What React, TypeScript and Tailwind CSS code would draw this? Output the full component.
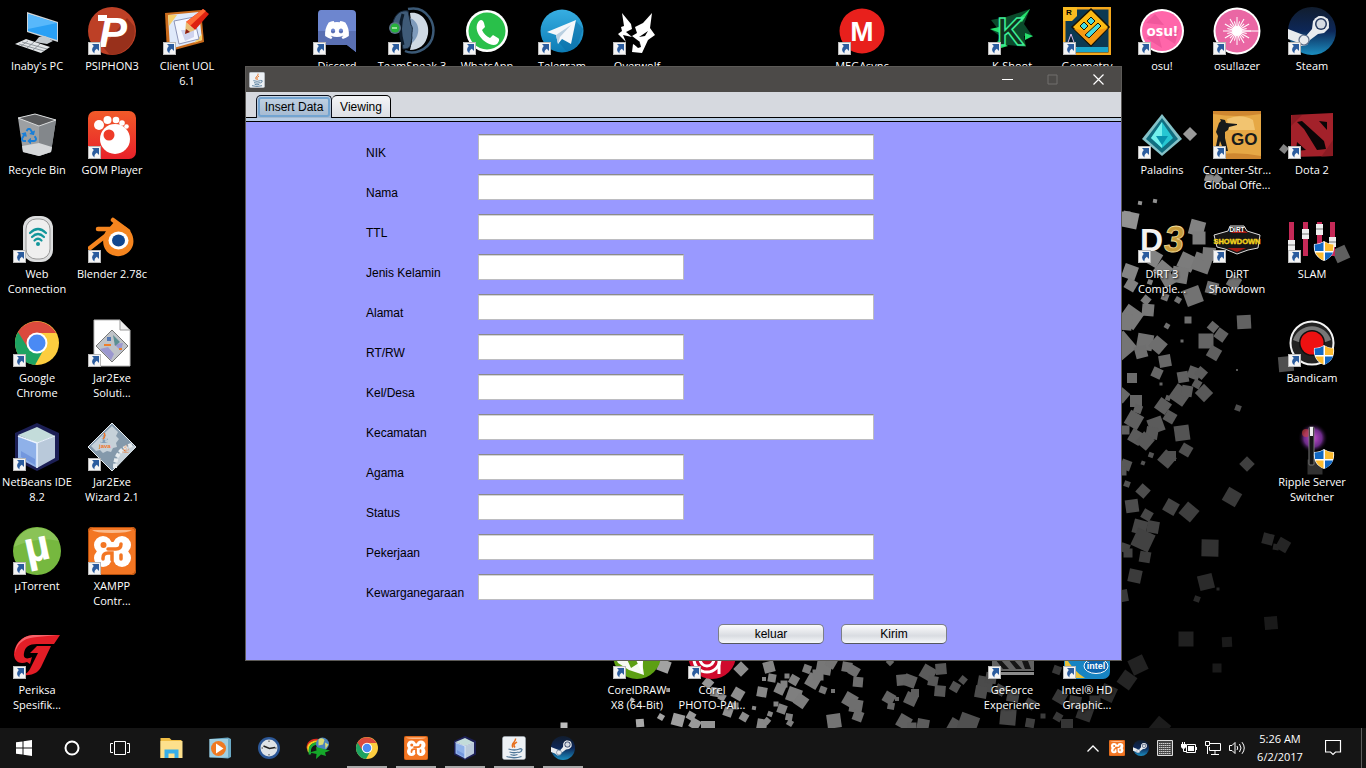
import React from "react";
import { FaDiscord, FaJava, FaRecycle } from "react-icons/fa";

/* ---------- wallpaper ---------- */

type Square = [x: number, y: number, size: number, angle: number];

const squares: Square[] = [
  [1190, 134, 10, 45], [1284, 149, 7, 40], [1209, 178, 8, 20], [1217, 179, 8, 40], [1155, 201, 4, 10],
  [1341, 254, 14, -25], [1286, 364, 15, -5], [1315, 467, 15, 0],
  [1130, 220, 16, 12], [1124, 218, 13, 0], [1197, 228, 15, 15], [1199, 238, 13, 0], [1187, 262, 16, 25],
  [1202, 263, 18, 20], [1209, 254, 13, 5], [1153, 258, 15, 30], [1130, 272, 14, 20], [1131, 285, 11, 30],
  [1163, 270, 15, 40], [1180, 275, 16, 10], [1168, 280, 12, 60], [1193, 296, 17, -20], [1212, 288, 12, 15],
  [1234, 282, 12, 30], [1148, 310, 12, 5], [1131, 317, 19, 35], [1124, 322, 16, 5], [1146, 300, 8, 40],
  [1178, 300, 6, 30], [1165, 297, 7, 20], [1140, 203, 4, 10], [1150, 282, 5, 20], [1188, 320, 7, 0],
  [1167, 326, 5, 30], [1244, 322, 14, -3], [1213, 327, 9, 40], [1221, 335, 11, 35], [1206, 341, 15, 0],
  [1214, 353, 12, 30], [1182, 341, 3, 0], [1122, 346, 22, 50], [1145, 342, 16, 10], [1141, 352, 12, -15],
  [1158, 345, 14, 40], [1165, 361, 12, -10], [1157, 373, 10, 25], [1161, 384, 3, 0], [1132, 378, 10, 0],
  [1183, 377, 11, -10], [1194, 373, 12, 20], [1201, 373, 10, 40], [1237, 370, 2, 0], [1197, 384, 8, 30],
  [1180, 395, 17, 35], [1187, 391, 11, 10], [1204, 393, 13, 45], [1122, 395, 12, 40], [1136, 401, 12, 0],
  [1138, 409, 8, 20], [1163, 406, 13, 35], [1168, 398, 5, 20], [1238, 408, 6, 20], [1170, 417, 11, 30],
  [1134, 420, 15, 30], [1125, 430, 9, 0], [1156, 425, 15, -20], [1152, 433, 12, 10], [1182, 433, 15, -8],
  [1136, 437, 13, 30], [1145, 441, 14, 40], [1186, 450, 11, 30], [1151, 455, 5, 20], [1167, 459, 14, 40],
  [1171, 456, 10, 0], [1143, 463, 4, 20], [1126, 465, 10, 20], [1122, 471, 9, 0], [1247, 464, 11, 45],
  [1232, 497, 15, 30], [1127, 484, 6, 20], [1143, 491, 11, 42], [1132, 506, 13, -8], [1171, 507, 13, 30],
  [1189, 512, 15, 40], [1147, 515, 10, 30], [1140, 527, 14, 15], [1153, 527, 12, 10], [1143, 540, 19, 25],
  [1125, 548, 9, 20], [1128, 553, 9, 0], [1145, 557, 11, 10], [1135, 576, 13, 12], [1122, 596, 12, -10],
  [1210, 548, 17, 1], [1206, 582, 15, -14], [1218, 589, 3, 0], [1197, 599, 6, 20], [1268, 539, 11, 15],
  [1276, 547, 6, 10], [1283, 545, 12, 30], [1271, 623, 13, -5], [1186, 639, 15, 0], [1227, 642, 10, -3],
  [1138, 665, 16, -25], [1217, 668, 9, 0], [1127, 680, 15, 35], [1160, 727, 16, 40],
  [664, 666, 12, 20], [741, 669, 11, 45], [769, 667, 11, -15], [772, 678, 8, 10], [764, 679, 4, 0],
  [780, 689, 10, 25], [784, 684, 7, 0], [762, 692, 10, 10], [794, 680, 9, 30], [787, 676, 5, 0],
  [807, 669, 8, 20], [824, 667, 15, 10], [831, 663, 10, 30], [813, 681, 13, 30], [818, 675, 11, 0],
  [823, 690, 7, 20], [833, 691, 4, 0], [847, 667, 10, 10], [854, 671, 10, 30], [858, 682, 10, 5],
  [850, 700, 13, 30], [856, 706, 13, 10], [858, 716, 10, 20], [794, 695, 14, 20], [801, 701, 12, 35],
  [782, 709, 9, 20], [789, 717, 7, 10], [790, 723, 6, 30], [776, 704, 5, 0], [770, 714, 5, 20],
  [738, 694, 11, 30], [728, 712, 9, 20], [735, 706, 7, 0], [744, 717, 8, 30], [754, 708, 4, 10],
  [762, 724, 10, 10], [767, 721, 6, 40], [834, 721, 14, -8], [902, 680, 11, -5], [910, 681, 12, 20],
  [889, 698, 11, 30], [891, 706, 7, 10], [911, 699, 12, 25], [915, 693, 8, 0], [897, 699, 4, 0],
  [928, 673, 14, 30], [933, 681, 10, 10], [941, 669, 11, -5], [940, 691, 11, 5], [955, 687, 9, 30],
  [963, 680, 7, 40], [904, 722, 13, 30], [923, 725, 12, 10], [912, 727, 9, 0], [955, 726, 13, 30],
  [968, 724, 19, 20], [1008, 717, 16, 5], [985, 684, 15, 10], [981, 692, 12, 10], [991, 678, 11, 10],
  [1030, 723, 9, 10], [1043, 716, 5, 0], [1058, 717, 8, 30], [1067, 725, 12, 0], [1085, 713, 15, 20],
  [1057, 670, 8, 20], [1060, 697, 12, 30], [1075, 702, 12, 10], [1108, 693, 15, 25], [1095, 701, 11, 0],
  [678, 720, 12, 15], [691, 716, 8, 30], [695, 724, 10, 30], [640, 723, 8, -5], [661, 717, 6, 30],
  [564, 726, 7, 0], [708, 683, 9, 40], [715, 692, 9, 10], [722, 697, 7, 30], [708, 728, 14, 0],
  [668, 690, 4, 0], [632, 700, 4, 30], [890, 662, 6, 45], [1000, 690, 10, 30], [1013, 696, 12, 10],
  [1030, 704, 10, 30],
];

function shade(x: number, y: number) {
  const level = y > 655 ? 190 - (x - 560) * 0.27 : 152 - (y - 200) * 0.24 - (x - 1120) * 0.2;
  return Math.round(Math.max(26, Math.min(190, level)));
}

function Wallpaper() {
  return (
    <svg className="pointer-events-none absolute left-0 top-0" width="1366" height="728" aria-hidden="true">
      {squares.map(([x, y, s, a], i) => {
        const g = shade(x, y);
        return (
          <rect key={i} x={x - s / 2} y={y - s / 2} width={s} height={s} transform={`rotate(${a} ${x} ${y})`} fill={`rgb(${g},${g},${g})`} />
        );
      })}
    </svg>
  );
}

/* ---------- icons (48 x 48 drawings) ---------- */

type ArtProps = { className?: string; children?: React.ReactNode };

function Art({ className = "size-12", children }: ArtProps) {
  return (
    <svg viewBox="0 0 48 48" className={className} aria-hidden="true">
      {children}
    </svg>
  );
}

const face = "Liberation Sans, sans-serif";

const PcArt = () => (
  <>
    <path d="M14 5 45 15v20L14 25z" fill="#cfd4d8" />
    <path d="M15 7 44 16v17L15 24z" fill="#2aa0f5" />
    <path d="M15 7 44 16 15 22z" fill="#58b8fb" />
    <path d="M26 30l6-1 8 5-6 3-12-2z" fill="#c3c9ce" />
    <path d="M2 37l11-5 24 8-9 6z" fill="#e3e6e8" />
    <path d="M6 37l25 7M9 35l25 7M8 39l7-5M14 41l7-6M20 43l7-6" stroke="#7f878d" strokeWidth=".8" />
  </>
);

const PsiphonArt = () => (
  <>
    <circle cx="24" cy="24" r="24" fill="#bd4026" />
    <path d="M15 40 39 11l7 8c4 16-9 29-24 29z" fill="#8c2b18" opacity=".75" />
    <path d="M10 8h9v6h-9z" fill="#fff" />
    <text x="11" y="40" fontFamily={face} fontWeight="bold" fontStyle="italic" fontSize="42" fill="#fff">P</text>
  </>
);

const ClientArt = () => (
  <>
    <path d="M2 6 38 3l3 32-37 10z" fill="#c96a1b" />
    <path d="M5 8l31-3 3 28-32 9z" fill="#dfe9fa" />
    <path d="M5 8h9L6 19zM31 36l8-9v6z" fill="#f6cf6a" />
    <path d="M11 14l20-4 5 22-20 5z" fill="#f4f7ff" stroke="#8c95b8" />
    <path d="M18 23h13v7l-9 4z" fill="#cfd3ee" />
    <path d="M40 2l6 5-14 16-9-8z" fill="#dd2110" />
    <path d="M40 2l3 2-16 15-4-4z" fill="#ff6a35" />
    <path d="M23 15l9 8-10 4z" fill="#e8bd72" />
    <path d="M22 27l1-5 4 3z" fill="#8d1d16" />
  </>
);

const BinArt = () => (
  <g transform="translate(0 -4)">
    <path d="M5 11l17-4 21 6-5 32-12 4-16-4z" fill="#9da0a3" />
    <path d="M26 19 43 13l-5 32-12 4z" fill="#83878b" />
    <path d="M9 39l17-3 13 4-1 5-12 4-16-4z" fill="#d5d7d9" />
    <path d="M5 11l17-4 21 6-17 6z" fill="#58595b" stroke="#d8dadb" />
    <FaRecycle x={8} y={21} size={16} color="#1a7fd8" />
  </g>
);

const GomArt = () => (
  <>
    <defs>
      <linearGradient id="gom" x2="0" y2="1">
        <stop stopColor="#f15a29" />
        <stop offset="1" stopColor="#e8212a" />
      </linearGradient>
    </defs>
    <rect width="48" height="48" rx="7" fill="url(#gom)" />
    <g fill="#fff">
      <circle cx="27" cy="28" r="15" />
      <circle cx="11" cy="14" r="5" />
      <circle cx="19.500" cy="9" r="4" />
      <circle cx="28" cy="9" r="3.300" />
      <circle cx="34" cy="12" r="2.800" />
      <circle cx="38.500" cy="15.500" r="2.300" />
    </g>
    <circle cx="21" cy="24" r="5.500" fill="#ee3b28" />
  </>
);

const WebArt = () => (
  <>
    <rect x="10" y="1" width="30" height="46" rx="12" fill="#dcddde" />
    <rect x="13" y="4" width="24" height="40" rx="10" fill="#efefef" stroke="#999" />
    <g fill="none" stroke="#12969b" strokeWidth="2.200" strokeLinecap="round">
      <path d="M17 18q8-8 16 0M19 22q6-6 12 0M21.500 25.500q3.500-3.500 7 0" />
    </g>
    <circle cx="25" cy="29" r="2" fill="#12969b" />
  </>
);

const BlenderArt = () => (
  <>
    <g stroke="#f5851f" strokeLinecap="round" fill="none" strokeWidth="4.500">
      <path d="M25 5 40 16M10 14H32M2 33 20 19" />
    </g>
    <path d="M21 13C14 18 12 33 22 39c9 5 20 1 23-9 2-9-3-16-9-19l-9-5z" fill="#f5851f" />
    <ellipse cx="30.500" cy="25.500" rx="10" ry="9" fill="#fff" />
    <ellipse cx="30.500" cy="25.500" rx="6.500" ry="6" fill="#11478f" />
  </>
);

const ChromeArt = () => (
  <>
    <circle cx="24" cy="24" r="22" fill="#fdcd3f" />
    <path d="M24 24 5 13A22 22 0 0 0 22 46l9-16z" fill="#1da362" />
    <path d="M5 13A22 22 0 0 1 43 14H24l-9 15z" fill="#db4a3d" />
    <circle cx="24" cy="24" r="10.500" fill="#fff" />
    <circle cx="24" cy="24" r="8.500" fill="#4a8af4" />
  </>
);

const GearArt = () => (
  <>
    <path d="M24 0 48 24 24 48 0 24z" fill="#8499ab" stroke="#e7edf1" />
    <path d="M24 3 30 9l-2 4 3 3-3 4 1 4-4 1-2 4-4-1-4 2-3-3-4 1-5-5z" fill="#c6d1d9" />
    <path d="M27 45c0-13 6-20 17-23l4 2-20 21z" fill="#c6d1d9" />
    <path d="M27 45c0-13 6-20 17-23" stroke="#e6ecef" strokeWidth="4" strokeDasharray="4 1.500" fill="none" />
    <FaJava x={11} y={10} size={10} color="#3f6d9a" />
    <path d="M16 10q2 3-1 6" stroke="#f0762a" strokeWidth="1.500" fill="none" />
    <text x="11" y="25" fontFamily={face} fontWeight="bold" fontSize="6" fill="#f0762a">java</text>
    <FaJava x={33} y={21} size={9} color="#e97832" />
  </>
);

const JarFileArt = () => (
  <>
    <path d="M6 1h26l10 10v36H6z" fill="#fff" stroke="#bbb" />
    <path d="M32 1v10h10z" fill="#eee" stroke="#999" />
    <path d="M24 11 40 27 24 43 8 27z" fill="#bfc3c8" stroke="#777" />
    <path d="M12 30l8-2 6 7-3 6zM26 25l9-1-2 8z" fill="#9b98cf" />
    <path d="M25 16l7 7-5 4z" fill="#5b8f92" />
    <path d="M16 25h7v2h-7zM31 29h3v2h-3z" fill="#ef7f2c" />
    <path d="M19 18h4v4h-4z" fill="#5377b3" />
  </>
);

const CubeArt = () => (
  <>
    <path d="M24 0 46 10v27L24 48 2 37V10z" fill="#1c1f55" />
    <path d="M24 4 42 13 24 20 5 12z" fill="#c3dcda" />
    <path d="M5 13l19 7v25L5 35z" fill="#8fb1e9" />
    <path d="M24 20l18-7v22L24 45z" fill="#b9c9da" />
    <path d="M5 13l19 7v25" fill="none" stroke="#edf5ff" strokeWidth="1.500" />
    <path d="M24 20l18-7" fill="none" stroke="#edf5ff" />
    <path d="M8 28l14 8v6L8 34z" fill="#7397de" />
  </>
);

const TorrentArt = () => (
  <>
    <circle cx="24" cy="24" r="24" fill="#76b83f" />
    <path d="M1 20A24 24 0 0 1 46 14C32 10 13 14 1 20z" fill="#93c862" opacity=".7" />
    <text x="12" y="34" transform="rotate(-12 24 24)" fontFamily={face} fontWeight="bold" fontSize="44" fill="#fff">µ</text>
  </>
);

const XamppArt = () => (
  <>
    <rect width="48" height="48" rx="4" fill="#f37623" />
    <rect x=".5" y=".5" width="47" height="47" rx="4" fill="none" stroke="#b34e0c" />
    <path d="M4 3h40q-3 3-20 3T4 3z" fill="#fbb98a" />
    <g fill="#fff">
      <circle cx="15" cy="18" r="9" />
      <circle cx="34" cy="18" r="9" />
      <circle cx="15" cy="31" r="9" />
      <circle cx="34" cy="31" r="9" />
      <path d="M15 15h19v18H15z" />
    </g>
    <circle cx="15.500" cy="18" r="3" fill="#f37623" />
    <path d="M20 22h8q5 0 5-5M15 32v-1q0-5 5-5h4v7M33 28v4" fill="none" stroke="#f37623" strokeWidth="3.500" strokeLinecap="round" />
  </>
);

const PeriksaArt = () => (
  <>
    <path d="M47 4H20C7 5 1 15 1 24c1 8 7 9 13 7l3 2 2-7c-6 3-9 1-8-4 1-6 5-9 13-9h17z" fill="#e31d26" />
    <path d="M38 15H24l-7 7h8L17 38c-2 4-5 5-8 6 12 1 17-3 20-10z" fill="#e31d26" />
    <path d="M45 4H20C8 5 2 14 2 22C5 10 13 7 24 6z" fill="#f7636a" />
  </>
);

const DiscordArt = () => (
  <>
    <path d="M8 3h31q4 0 4 4v38l-9-7H9q-4 0-4-4V7q0-4 3-4z" fill="#6d86cf" />
    <path d="M5 24h38v21l-9-7H9q-4 0-4-4z" fill="#5a70b3" />
    <FaDiscord x={11} y={10} size={26} color="#fff" />
  </>
);

const TeamSpeakArt = () => (
  <>
    <path d="M20 2C39-2 49 17 44 32 39 44 25 48 17 44" fill="none" stroke="#3b5976" strokeWidth="2.500" />
    <path d="M22 6c11-2 20 9 18 21-2 11-9 16-18 16l3-13z" fill="#cfd9e3" />
    <path d="M22 11c9 3 12 16 2 25z" fill="#7f9bbb" />
    <path d="M5 15C8 6 13 3 20 4l3 14c3 4 0 7 1 13-2 7 0 11-9 11l-3-22z" fill="#3f5b78" stroke="#17283b" />
    <path d="M15 7q-5 14 0 31" stroke="#0d1b2a" strokeWidth="3" fill="none" />
    <circle cx="7" cy="21" r="6" fill="#597087" />
    <circle cx="7" cy="21" r="4.500" fill="#28b23b" />
    <path d="M4 21h5" stroke="#b7f2b7" strokeWidth="1.500" />
  </>
);

const WhatsAppArt = () => (
  <>
    <circle cx="24" cy="24" r="21" fill="#fff" />
    <circle cx="24" cy="24" r="18.500" fill="#29c04a" />
    <path d="M16 14c2-2 4-1 5 2l1 4-3 3c2 4 4 6 8 8l3-3 5 3c2 1 1 4-1 6-8 5-27-12-18-23z" fill="#fff" />
  </>
);

const TelegramArt = () => (
  <>
    <defs>
      <linearGradient id="tg" x2="0" y2="1">
        <stop stopColor="#37aee2" />
        <stop offset="1" stopColor="#0c7cb5" />
      </linearGradient>
    </defs>
    <circle cx="24" cy="24" r="21.500" fill="url(#tg)" />
    <path d="M38 14 45 22 39 39 29 45 19 33z" fill="#0b6ea5" opacity=".5" />
    <path d="M9 25 38 13 33 37 24 32l-4 5-2-9z" fill="#f4f7fa" />
    <path d="M18 28 33 18 22 30l-2 7z" fill="#b9cfe0" />
  </>
);

const OverwolfArt = () => (
  <>
    <path d="M9 6 18 17l1 5-6 3 6 5-9-2 3 7-8-8 4-3-1-4 3-1z" fill="#fff" />
    <path d="M39 6l-2 15 5 7-7 5-6 13-10-1 1-8 5 3 2-5-8-6 5-3-2-6 8-4z" fill="#fff" />
    <path d="M35 24l-3 5-6 1zM22 38l5-2 1 4-3 1z" fill="#000" />
  </>
);

const MegaArt = () => (
  <>
    <circle cx="24" cy="24" r="22.500" fill="#e8201c" />
    <text x="24" y="34" textAnchor="middle" fontFamily={face} fontWeight="bold" fontSize="28" fill="#fff">M</text>
  </>
);

const KShootArt = () => (
  <>
    <path d="M3 13 18 10 42 2 36 17 45 30 36 29 38 40 20 38 5 43 12 29 2 22 10 22z" fill="#0b4a2b" />
    <path d="M42 2 30 12 34 15zM2 22l9-2 1 6zM6 43l4-9 10 5zM37 26l8 3-8 4z" fill="#26e06c" />
    <text x="9" y="38" fontFamily={face} fontWeight="bold" fontSize="38" fill="#12301f" stroke="#3dee96" strokeWidth="1.500">K</text>
  </>
);

const GeometryArt = () => (
  <>
    <rect width="48" height="48" fill="#0b3952" />
    <rect x="1" y="1" width="46" height="46" fill="none" stroke="#f5a81c" strokeWidth="3" />
    <path d="M3 40h42v5H3z" fill="#1aa6cc" />
    <path d="M0 0h14v9L9 14H0z" fill="#f9bb20" />
    <text x="3" y="8" fontFamily={face} fontWeight="bold" fontSize="8">R</text>
    <path d="M3 41 8 27l5 14z" fill="#061d2d" stroke="#dbe" />
    <path d="M28 2 46 20 28 39 9 20z" fill="#fcbb12" stroke="#191303" strokeWidth="1.500" />
    <path d="M45 21 28 38 11 22l17 2z" fill="#f59a13" />
    <path d="M21 15l4-4 4 4-4 4zM28 10l4-4 4 4-4 4z" transform="translate(-4 4)" fill="#45dbe0" stroke="#191303" />
    <path d="M22 28 35 16l3 3-12 12z" fill="#45dbe0" stroke="#191303" />
  </>
);

const OsuArt = () => (
  <>
    <circle cx="24" cy="24" r="22" fill="#fff" />
    <circle cx="24" cy="24" r="20" fill="#ff66aa" />
    <path d="M8 16l9-9 9 11zM26 30l15-8-4 15zM8 31l12-5 4 15z" fill="#f0589c" />
    <text x="24" y="29" textAnchor="middle" fontFamily="Open Sans, sans-serif" fontWeight="bold" fontSize="15" fill="#fff">osu!</text>
  </>
);

const LazerArt = () => (
  <>
    <circle cx="24" cy="24" r="23.500" fill="#fff" />
    <circle cx="24" cy="24" r="21.500" fill="#ea67a4" />
    <g stroke="#fff" strokeWidth="1">
      {Array.from({ length: 12 }, (_, i) => (
        <path key={i} d={i % 2 ? "M24 14v20" : "M24 10v28"} transform={`rotate(${i * 15} 24 24)`} />
      ))}
      <path d="M24 24h22" />
    </g>
    <circle cx="24" cy="24" r="5" fill="#fff" />
  </>
);

const SteamArt = () => (
  <>
    <defs>
      <linearGradient id="steam" x2="0" y2="1">
        <stop stopColor="#111d2e" />
        <stop offset=".5" stopColor="#0d2758" />
        <stop offset="1" stopColor="#1b8ec0" />
      </linearGradient>
    </defs>
    <circle cx="24" cy="24" r="24" fill="url(#steam)" />
    <path d="M0 22 18 29 24 22 25 14l6-5 9 3 1 9-5 5-6 1-8 6-3 5-6 1-5-4-8-3z" fill="#e8ebee" />
    <circle cx="33" cy="17" r="8" fill="#e8ebee" />
    <circle cx="33" cy="17" r="6" fill="#26395e" />
    <circle cx="33" cy="17" r="4.500" fill="#d6dbe2" />
    <circle cx="16" cy="33" r="5" fill="none" stroke="#5c6d88" strokeWidth="1.200" />
  </>
);

const PaladinsArt = () => (
  <>
    <path d="M24 3 44 28 24 45 4 28z" fill="#84c2c8" />
    <path d="M24 7 40 28 24 42 8 28z" fill="#116e80" />
    <path d="M24 11 35 27 24 37 13 27z" fill="#26c7d3" />
    <path d="M24 11v26l-11-10z" fill="#73f0ec" />
    <path d="M18 25h12l-6 9z" fill="#0792ad" />
  </>
);

const CsgoArt = () => (
  <>
    <rect width="48" height="48" fill="#e6a845" />
    <path d="M0 0h48v3q-24 4-48 0zM0 44q24-4 48 1v3H0z" fill="#cf8730" />
    <path d="M14 8q14-6 26 1l2 10H16z" fill="#f2c470" />
    <path d="M7 8l5 1 1 3 11 1v1l-8 2-1 3-3 2v6l3 13h-4l-4-10-2 10H2l3-15-2-4 3-9 2-2z" fill="#171a1b" />
    <text x="18" y="34" fontFamily={face} fontWeight="bold" fontSize="17" fill="#171a1b">GO</text>
  </>
);

const DotaArt = () => (
  <>
    <path d="M3 4 45 2v43L3 46z" fill="#a3212a" />
    <path d="M9 11l5-1 22 20 2 8-9 1L16 18zM31 10l8 1v8zM9 31l9 8-10 1z" fill="#0b0506" />
    <path d="M3 15l1-11 10 0zM45 29v16l-12 1z" fill="#7c1820" opacity=".6" />
  </>
);

const Dirt3Art = () => (
  <>
    <text x="2" y="36" fontFamily={face} fontWeight="bold" fontSize="32" fill="#f2f2f0">D</text>
    <text x="26" y="37" fontFamily={face} fontWeight="bold" fontStyle="italic" fontSize="36" fill="#c79b3b" stroke="#f2dc98" strokeWidth=".8">3</text>
  </>
);

const ShowdownArt = () => (
  <>
    <path d="M1 20 15 16 17 11 31 11 34 16 47 20 45 33 35 35 24 39 12 34 4 32z" fill="#161616" stroke="#ddd" />
    <path d="M14 33l10 4 9-4zM17 18l6-2h9l3 2z" fill="#a51a14" />
    <text x="24" y="17" textAnchor="middle" fontFamily={face} fontWeight="bold" fontSize="6.500" fill="#fff">DiRT</text>
    <text x="24" y="29" textAnchor="middle" fontFamily={face} fontWeight="bold" fontSize="7.500" fill="#f3d21d" stroke="#f3d21d" strokeWidth=".4">SHOWDOWN</text>
  </>
);

const SlamArt = () => (
  <>
    <path d="M1 7h5v34H1zM15 7h5v34h-5zM29 7h5v34h-5zM42 7h5v34h-5z" fill="#c52957" />
    <path d="M0 25h7v10H0zM14 14h7v10h-7zM28 9h7v11h-7zM41 22h7v10h-7z" fill="#eee" />
    <path d="M0 30h7M14 19h7M28 14h7M41 27h7" stroke="#777" />
  </>
);

const BandicamArt = () => (
  <>
    <circle cx="24" cy="24" r="21.500" fill="#222" stroke="#f5f5f5" strokeWidth="2" />
    <path d="M5 21a20 20 0 0 1 38 0q-19 8-38 0z" fill="#777" />
    <circle cx="24" cy="24" r="13" fill="#111" />
    <circle cx="24" cy="24" r="11.500" fill="#ee1111" />
  </>
);

const RippleArt = () => (
  <>
    <defs>
      <radialGradient id="glow">
        <stop stopColor="#c64fd0" />
        <stop offset=".6" stopColor="#6a2a86" />
        <stop offset="1" stopColor="#000" stopOpacity="0" />
      </radialGradient>
    </defs>
    <circle cx="25" cy="15" r="15" fill="url(#glow)" />
    <circle cx="18" cy="10" r="4" fill="#d5433b" opacity=".6" />
    <rect x="21" y="4" width="5" height="38" rx="1" fill="#151515" stroke="#777" />
    <rect x="22" y="4" width="3" height="9" fill="#eee" />
  </>
);

const CorelArt = () => (
  <>
    <circle cx="24" cy="24" r="24" fill="#5c9f12" />
    <path d="M1 24h11l6 13 11-7 2 14-15-5-11-7z" fill="#f6faf2" />
    <path d="M19 20l10 22 2-22z" fill="#fff" />
  </>
);

const PhotoArt = () => (
  <>
    <circle cx="24" cy="24" r="24" fill="#cf0a2c" />
    <g fill="none" stroke="#fff" strokeWidth="3">
      <circle cx="19" cy="28" r="7" />
      <circle cx="19" cy="28" r="13" />
    </g>
    <path d="M31 18v25" stroke="#fff" strokeWidth="3" />
  </>
);

const GeForceArt = () => (
  <>
    <path d="M4 20h42v20H4z" fill="#626262" />
    <path d="M7 28l8 10h6l-9-10zM20 28l8 10h6l-9-10zM34 30h6l3 8h-6z" fill="#151515" />
    <path d="M10 41h36v3H10z" fill="#8b8b8b" />
  </>
);

const IntelArt = () => (
  <>
    <rect x="1" y="6" width="46" height="42" rx="7" fill="#1784c3" />
    <path d="M2 25q8 15 20 22H7q-5 0-5-6z" fill="#e9c23b" />
    <ellipse cx="33" cy="35" rx="12" ry="7.500" fill="#0d64ae" stroke="#fff" />
    <text x="33" y="38" textAnchor="middle" fontFamily={face} fontWeight="bold" fontSize="9" fill="#fff">intel</text>
  </>
);

const JavaArt = () => (
  <>
    <rect x="1" y="1" width="46" height="46" rx="4" fill="#edf1f5" stroke="#aab4bf" />
    <path d="M27 5c2 7-11 9-5 18M30 12c-6 4-8 5-4 11" fill="none" stroke="#e76f1c" strokeWidth="3" />
    <path d="M13 26q12 4 22 0M15 32q9 3 18 0M17 37q7 3 14 0M9 41q15 5 30 0M35 25q8 0 3 6-3 2-5 2" fill="none" stroke="#4d7698" strokeWidth="2.500" />
  </>
);

/* ---------- desktop ---------- */

type Shortcut = { at: string; lines: string[]; art: React.ComponentType; link?: boolean; shield?: boolean };

const shortcuts: Shortcut[] = [
  { at: "col-start-1 row-start-1", lines: ["Inaby's PC"], art: PcArt, link: false },
  { at: "col-start-1 row-start-2", lines: ["Recycle Bin"], art: BinArt, link: false },
  { at: "col-start-1 row-start-3", lines: ["Web", "Connection"], art: WebArt },
  { at: "col-start-1 row-start-4", lines: ["Google", "Chrome"], art: ChromeArt },
  { at: "col-start-1 row-start-5", lines: ["NetBeans IDE", "8.2"], art: CubeArt },
  { at: "col-start-1 row-start-6", lines: ["µTorrent"], art: TorrentArt },
  { at: "col-start-1 row-start-7", lines: ["Periksa", "Spesifik..."], art: PeriksaArt },
  { at: "col-start-2 row-start-1", lines: ["PSIPHON3"], art: PsiphonArt },
  { at: "col-start-2 row-start-2", lines: ["GOM Player"], art: GomArt },
  { at: "col-start-2 row-start-3", lines: ["Blender 2.78c"], art: BlenderArt },
  { at: "col-start-2 row-start-4", lines: ["Jar2Exe", "Soluti..."], art: JarFileArt },
  { at: "col-start-2 row-start-5", lines: ["Jar2Exe", "Wizard 2.1"], art: GearArt },
  { at: "col-start-2 row-start-6", lines: ["XAMPP", "Contr..."], art: XamppArt },
  { at: "col-start-3 row-start-1", lines: ["Client UOL", "6.1"], art: ClientArt },
  { at: "col-start-5 row-start-1", lines: ["Discord"], art: DiscordArt },
  { at: "col-start-6 row-start-1", lines: ["TeamSpeak 3"], art: TeamSpeakArt },
  { at: "col-start-7 row-start-1", lines: ["WhatsApp"], art: WhatsAppArt },
  { at: "col-start-8 row-start-1", lines: ["Telegram"], art: TelegramArt },
  { at: "col-start-9 row-start-1", lines: ["Overwolf"], art: OverwolfArt },
  { at: "col-start-12 row-start-1", lines: ["MEGAsync"], art: MegaArt },
  { at: "col-start-14 row-start-1", lines: ["K-Shoot"], art: KShootArt },
  { at: "col-start-15 row-start-1", lines: ["Geometry"], art: GeometryArt },
  { at: "col-start-16 row-start-1", lines: ["osu!"], art: OsuArt },
  { at: "col-start-17 row-start-1", lines: ["osu!lazer"], art: LazerArt },
  { at: "col-start-18 row-start-1", lines: ["Steam"], art: SteamArt },
  { at: "col-start-16 row-start-2", lines: ["Paladins"], art: PaladinsArt },
  { at: "col-start-17 row-start-2", lines: ["Counter-Str...", "Global Offe..."], art: CsgoArt },
  { at: "col-start-18 row-start-2", lines: ["Dota 2"], art: DotaArt },
  { at: "col-start-16 row-start-3", lines: ["DiRT 3", "Comple..."], art: Dirt3Art },
  { at: "col-start-17 row-start-3", lines: ["DiRT", "Showdown"], art: ShowdownArt },
  { at: "col-start-18 row-start-3", lines: ["SLAM"], art: SlamArt, shield: true },
  { at: "col-start-18 row-start-4", lines: ["Bandicam"], art: BandicamArt, shield: true },
  { at: "col-start-18 row-start-5", lines: ["Ripple Server", "Switcher"], art: RippleArt, link: false, shield: true },
  { at: "col-start-9 row-start-7", lines: ["CorelDRAW", "X8 (64-Bit)"], art: CorelArt },
  { at: "col-start-10 row-start-7", lines: ["Corel", "PHOTO-PAI..."], art: PhotoArt },
  { at: "col-start-14 row-start-7", lines: ["GeForce", "Experience"], art: GeForceArt },
  { at: "col-start-15 row-start-7", lines: ["Intel® HD", "Graphic..."], art: IntelArt },
];

function DesktopIcon({ at, lines, art: Drawing, link = true, shield = false }: Shortcut) {
  return (
    <button type="button" className={`${at} flex w-[74px] flex-col items-center gap-[3px] pt-[7px]`}>
      <Art>
        <Drawing />
        {shield && (
          <g>
            <path d="M36 26q4 3 10 3c1 9-3 14-10 17-7-3-11-8-10-17q6 0 10-3z" fill="#fff" />
            <path d="M35.500 27v9H27l-.500-6.500q5 0 9-2.500zM37 37.500h8q-2 5-8 8z" fill="#1168c4" />
            <path d="M37 27q4 2.500 8.500 2.500L45 36h-8zM35.500 37.500v8q-6-3-8-8z" fill="#fdbb2f" />
          </g>
        )}
        {link && (
          <g>
            <rect x=".5" y="35.500" width="12" height="12" fill="#f4f4f4" stroke="#b9b9b9" />
            <path d="M4 37h7v7l-2.200-2.200Q6 43.500 6.500 46.500 2 43 5.800 39z" fill="#2b5c9e" />
          </g>
        )}
      </Art>
      <span className="flex flex-col items-center whitespace-nowrap font-['Open_Sans',sans-serif] text-[11px] leading-[15px] text-white [text-shadow:1px_1px_2px_#000]">
        {lines.map((l) => (
          <span key={l}>{l}</span>
        ))}
      </span>
    </button>
  );
}

/* ---------- application window ---------- */

const fields = [
  { id: "nik", label: "NIK", wide: true },
  { id: "nama", label: "Nama", wide: true },
  { id: "ttl", label: "TTL", wide: true },
  { id: "jenis", label: "Jenis Kelamin", wide: false },
  { id: "alamat", label: "Alamat", wide: true },
  { id: "rtrw", label: "RT/RW", wide: false },
  { id: "desa", label: "Kel/Desa", wide: false },
  { id: "kecamatan", label: "Kecamatan", wide: true },
  { id: "agama", label: "Agama", wide: false },
  { id: "status", label: "Status", wide: false },
  { id: "pekerjaan", label: "Pekerjaan", wide: true },
  { id: "warga", label: "Kewarganegaraan", wide: true },
];

function PushButton({ children }: { children: React.ReactNode }) {
  return (
    <button
      type="button"
      className="h-5 w-[106px] rounded-[5px] border border-[#7c7f87] border-b-[#55585f] bg-linear-to-b from-[#fbfbfc] via-[#d9dce1] via-60% to-[#f6f8fb] leading-4"
    >
      {children}
    </button>
  );
}

function AppWindow() {
  return (
    <section className="absolute left-[245px] top-[66px] w-[877px] border border-[#5c5a57] bg-[#d6d9df] font-['Liberation_Sans',sans-serif] text-[12px] text-black">
      <header className="flex h-[25px] items-center bg-[#4c4a48] pl-[3px]">
        <Art className="size-4">
          <JavaArt />
        </Art>
        <div className="ml-auto flex h-full text-white">
          <button type="button" aria-label="Minimize" className="grid w-[45px] place-items-center">
            <svg width="11" height="11" aria-hidden="true"><path d="M0 5.500h11" stroke="#fff" /></svg>
          </button>
          <button type="button" aria-label="Maximize" disabled className="grid w-[45px] place-items-center">
            <svg width="11" height="11" aria-hidden="true"><path d="M1 1h9v9H1z" fill="none" stroke="#716f6d" /></svg>
          </button>
          <button type="button" aria-label="Close" className="grid w-[46px] place-items-center">
            <svg width="11" height="11" aria-hidden="true"><path d="M.5 .5l10 10M10.500 .5l-10 10" stroke="#fff" strokeWidth="1.200" /></svg>
          </button>
        </div>
      </header>

      <div role="tablist" className="flex h-[26px] items-end">
        <span className="h-px w-[10px] bg-black" />
        <button
          type="button"
          role="tab"
          aria-selected="true"
          className="h-[23px] w-[76px] rounded-t-[5px] border border-b-0 border-[#0a0f1c] bg-linear-to-b from-[#c3d3e4] to-[#a3b8d0] p-px"
        >
          <span className="flex h-full items-center justify-center rounded-[3px] border-2 border-[#73a4d1]">Insert Data</span>
        </button>
        <button
          type="button"
          role="tab"
          aria-selected="false"
          className="h-[23px] w-[59px] rounded-t-[5px] border border-l-0 border-black bg-linear-to-b from-[#f4f5f7] to-[#dcdfe5]"
        >
          Viewing
        </button>
        <span className="h-px flex-1 bg-black" />
      </div>
      <div className="h-1 border-b border-black bg-[#b8cce4]" />

      <form className="bg-[#9999ff] pb-4 pl-[120px] pr-[174px] pt-3">
        <div className="flex flex-col gap-[14px]">
          {fields.map((f) => (
            <div key={f.id} className="flex items-end">
              <label htmlFor={f.id} className="w-28 leading-[13px]">
                {f.label}
              </label>
              <input
                id={f.id}
                type="text"
                className={`h-[26px] border border-[#bcbcc0] border-t-[#8b8b8b] bg-white px-1 shadow-[inset_0_1px_0_#d6d6d6] outline-none ${f.wide ? "w-[396px]" : "w-[206px]"}`}
              />
            </div>
          ))}
        </div>
        <div className="mt-6 flex justify-end gap-[17px]">
          <PushButton>keluar</PushButton>
          <PushButton>Kirim</PushButton>
        </div>
      </form>
    </section>
  );
}

/* ---------- taskbar ---------- */

const ExplorerArt = () => (
  <>
    <path d="M3 4h18l4 4h20v36H3z" fill="#f0be45" />
    <path d="M3 10h44v34H3z" fill="#fde08c" />
    <path d="M11 44V27h28v17h-8v-9H19v9z" fill="#36aee8" />
  </>
);
const MediaArt = () => (
  <>
    <path d="M3 6 40 3l6 3v36l-6 3L3 42z" fill="#6aa9c5" />
    <path d="M3 6h37v37H3z" fill="#9fcfe2" />
    <circle cx="21" cy="25" r="15" fill="#f07a22" />
    <path d="M16 15v20l15-10z" fill="#fff" />
  </>
);
const ClockArt = () => (
  <>
    <circle cx="24" cy="24" r="22" fill="#2c5796" />
    <circle cx="24" cy="24" r="17" fill="#dfe3e6" />
    <path d="M13 20l12 5 11-2" fill="none" stroke="#222" strokeWidth="3" />
    <path d="M24 9v3M24 36v3M9 24h3M36 24h3" stroke="#444" strokeWidth="2" />
  </>
);
const IdmArt = () => (
  <>
    <path d="M3 25C3 8 18 6 27 8" fill="none" stroke="#e22b1c" strokeWidth="4" />
    <path d="M6 32C-1 15 17 9 29 11" fill="none" stroke="#f5ce21" strokeWidth="4" />
    <path d="M8 37C4 18 18 13 29 15" fill="none" stroke="#1aaf37" strokeWidth="5" />
    <circle cx="33" cy="16" r="13" fill="#4a83bf" />
    <path d="M25 7q8-5 12 1l-3 9-9 2zM38 13l7 4-6 9z" fill="#d8da75" />
    <path d="M20 22l28 7-10 4 2 7-10-3-10 9 1-10-14-3 14-4z" fill="#15a82a" />
  </>
);

const pinned = [
  { name: "File Explorer", art: ExplorerArt, open: false },
  { name: "Media Player", art: MediaArt, open: false },
  { name: "Clock", art: ClockArt, open: false },
  { name: "Download Manager", art: IdmArt, open: false },
  { name: "Chrome", art: ChromeArt, open: true },
  { name: "XAMPP", art: XamppArt, open: true },
  { name: "NetBeans", art: CubeArt, open: true },
  { name: "Java", art: JavaArt, open: true },
  { name: "Steam", art: SteamArt, open: true },
];

function Taskbar() {
  return (
    <footer className="relative flex h-10 bg-[#151515] text-white">
      <button type="button" aria-label="Start" className="grid w-12 place-items-center">
        <svg width="16" height="16" aria-hidden="true">
          <path d="M0 2.300 6.500 1.400V7.500H0zM7.500 1.200 16 0v7.500H7.500zM0 8.500h6.500v6.100L0 13.700zM7.500 8.500H16V16l-8.500-1.200z" fill="#fff" />
        </svg>
      </button>
      <button type="button" aria-label="Cortana" className="grid w-12 place-items-center">
        <svg width="16" height="16" aria-hidden="true"><circle cx="8" cy="8" r="6.500" fill="none" stroke="#fff" strokeWidth="2" /></svg>
      </button>
      <button type="button" aria-label="Task view" className="mr-[2px] grid w-12 place-items-center">
        <svg width="20" height="14" aria-hidden="true">
          <path d="M4.500 .5h11v13h-11zM3 2.500H.5v9H3M17 2.500h2.500v9H17" fill="none" stroke="#fff" />
        </svg>
      </button>
      {pinned.map(({ name, art: Drawing, open }) => (
        <button key={name} type="button" aria-label={name} className="flex w-[49px] flex-col items-center justify-between pt-2">
          <Art className="size-6">
            <Drawing />
          </Art>
          <span className={`h-[2px] w-10 ${open ? "bg-[#a9a9a9]" : "bg-transparent"}`} />
        </button>
      ))}
      <div className="ml-auto flex items-center">
        <button type="button" aria-label="Show hidden icons" className="grid h-full w-6 place-items-center">
          <svg width="12" height="7" aria-hidden="true"><path d="M.5 6.500 6 1l5.500 5.500" fill="none" stroke="#fff" strokeWidth="1.300" /></svg>
        </button>
        <span className="grid w-6 place-items-center"><Art className="size-4"><XamppArt /></Art></span>
        <span className="grid w-6 place-items-center"><Art className="size-4"><SteamArt /></Art></span>
        <span className="grid w-6 place-items-center">
          <svg width="16" height="16" aria-hidden="true">
            <path d="M.5 .5h15v15H.5z" fill="#444" stroke="#ddd" />
            <path d="M2 3.500h12M2 5.500h12M2 7.500h12M2 9.500h12M2 11.500h12M2 13.500h12" stroke="#ccc" strokeDasharray="1.500 .5" />
          </svg>
        </span>
        <span className="grid w-6 place-items-center">
          <svg width="16" height="14" aria-hidden="true">
            <path d="M5.500 3.500h9v8h-9zM15.500 6v3" fill="none" stroke="#fff" />
            <path d="M7 5h6v5H7z" fill="#fff" />
            <path d="M0 3h5v3q-1 2-2.500 2T0 6zM1 1h1v2H1zM3 1h1v2H3z" fill="#fff" />
            <path d="M2.500 8v2.500H5" fill="none" stroke="#fff" />
          </svg>
        </span>
        <span className="grid w-6 place-items-center">
          <svg width="16" height="14" aria-hidden="true">
            <path d="M5 2.500h10.500v7H4.500V6M10 10v3M6 13.500h8M.5 .5h4v4h-4zM2.500 5v8" fill="none" stroke="#fff" />
          </svg>
        </span>
        <span className="grid w-6 place-items-center">
          <svg width="17" height="14" aria-hidden="true">
            <path d="M.5 4.500H3l3-3v11l-3-3H.5zM8 5q1.500 2 0 4M10.500 3q3 4 0 8M13 1.200q4.500 5.800 0 11.600" fill="none" stroke="#fff" />
          </svg>
        </span>
        <time className="flex w-[62px] flex-col items-center font-['Open_Sans',sans-serif] text-[11px] leading-[18px]">
          <span>5:26 AM</span>
          <span>6/2/2017</span>
        </time>
        <button type="button" aria-label="Action center" className="grid h-full w-[44px] place-items-center">
          <svg width="17" height="16" aria-hidden="true">
            <path d="M.5 .5h15v11.500h-5L8 14.500 5.500 12h-5z" fill="none" stroke="#fff" strokeWidth="1.200" />
          </svg>
        </button>
        <button type="button" aria-label="Show desktop" className="ml-[6px] h-full w-[5px] border-l border-[#5e5e5e]" />
      </div>
    </footer>
  );
}

export default function App() {
  return (
    <div className="relative flex min-h-screen flex-col overflow-hidden bg-black">
      <Wallpaper />
      <main className="relative grid flex-1 grid-cols-[repeat(18,75px)] grid-rows-[repeat(7,104px)] items-start">
        {shortcuts.map((s) => (
          <DesktopIcon key={s.at} {...s} />
        ))}
      </main>
      <AppWindow />
      <Taskbar />
    </div>
  );
}
